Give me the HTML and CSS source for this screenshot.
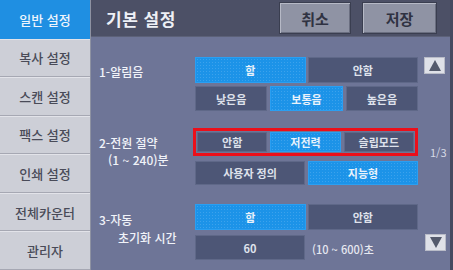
FILE: index.html
```html
<!DOCTYPE html>
<html lang="ko">
<head>
<meta charset="utf-8">
<title>기본 설정</title>
<link rel="stylesheet" href="styles.css">
</head>
<body>
<div class="screen">
  <nav class="side">
    <div class="tab active">일반 설정</div>
    <div class="tab">복사 설정</div>
    <div class="tab">스캔 설정</div>
    <div class="tab">팩스 설정</div>
    <div class="tab">인쇄 설정</div>
    <div class="tab">전체카운터</div>
    <div class="tab">관리자</div>
  </nav>
  <main class="main">
    <header class="head">
      <h1 class="title">기본 설정</h1>
      <div class="actions">
        <button class="hbtn">취소</button>
        <button class="hbtn save">저장</button>
      </div>
    </header>
    <div class="content">
      <section class="sec sec1">
        <div class="label">1-알림음</div>
        <div class="ctrls">
          <div class="row two tall"><span class="btn on">함</span><span class="btn">안함</span></div>
          <div class="row three"><span class="btn">낮은음</span><span class="btn on">보통음</span><span class="btn">높은음</span></div>
        </div>
        <div class="aside"><span class="arrow"><svg width="12" height="11" viewBox="0 0 12 11"><polygon points="6,0 12,11 0,11" fill="#545a6c"/></svg></span></div>
      </section>
      <section class="sec sec2">
        <div class="label"><span class="line">2-전원 절약</span><span class="line indent1">(1 ~ 240)분</span></div>
        <div class="ctrls">
          <div class="hl"><div class="row three"><span class="btn">안함</span><span class="btn on">저전력</span><span class="btn">슬립모드</span></div></div>
          <div class="row two short"><span class="btn">사용자 정의</span><span class="btn on">지능형</span></div>
        </div>
        <div class="aside"><span class="page">1/3</span></div>
      </section>
      <section class="sec sec3">
        <div class="label"><span class="line">3-자동</span><span class="line indent2">초기화 시간</span></div>
        <div class="ctrls">
          <div class="row two tall"><span class="btn on">함</span><span class="btn">안함</span></div>
          <div class="row field"><span class="btn">60</span><span class="range">(10 ~ 600)초</span></div>
        </div>
        <div class="aside"><span class="arrow down"><svg width="12" height="11" viewBox="0 0 12 11"><polygon points="0,0 12,0 6,11" fill="#545a6c"/></svg></span></div>
      </section>
    </div>
  </main>
</div>
</body>
</html>
```
FILE: styles.css
```css
* { box-sizing: border-box; }
html, body { margin: 0; padding: 0; }
body {
  width: 453px;
  height: 270px;
  overflow: hidden;
  font-family: "Noto Sans CJK KR", "Noto Sans", sans-serif;
  background: #6e7597;
}
.screen {
  display: flex;
  width: 453px;
  height: 270px;
}
.side {
  width: 91px;
  flex: none;
  display: grid;
  grid-template-rows: repeat(7, 1fr);
  background: #cdcfd7;
  border-right: 1px solid #8e92a2;
}
.tab {
  display: flex;
  align-items: center;
  justify-content: center;
  font-size: 13px;
  font-weight: 500;
  color: #494b58;
  border-top: 1px solid #e2e3e9;
  border-bottom: 1px solid #a6a8b3;
}
.tab.active {
  background: #1f8fe2;
  color: #eef4fc;
  border-color: #1f8fe2;
}
.main {
  flex: 1;
  display: flex;
  flex-direction: column;
  border-right: 3px solid #454a60;
}
.head {
  height: 37px;
  flex: none;
  display: flex;
  align-items: center;
  justify-content: space-between;
  background: #4c5066;
  padding: 0 13px 0 15px;
  border-bottom: 1px solid #5c6178;
}
.title {
  margin: 0;
  font-size: 17px;
  font-weight: 700;
  color: #eef0f6;
  letter-spacing: 0.5px;
}
.actions {
  display: flex;
  gap: 11px;
}
.hbtn {
  width: 72px;
  height: 32px;
  font-family: inherit;
  font-size: 15px;
  font-weight: 700;
  color: #2f3242;
  background: #8f93a4;
  border: 1px solid #3a3e50;
  box-shadow: inset 1px 1px 0 #b6b9c6, inset -1px -1px 0 #6a6e80;
  padding: 0;
}
.hbtn.save { width: 75px; }
.content {
  flex: 1;
  padding-top: 20px;
  background-color: #6e7597;
}
.sec {
  display: grid;
  grid-template-columns: 104px 223px 1fr;
}
.sec2 { margin-top: 17px; }
.sec3 { margin-top: 19px; }
.label {
  color: #f1f3f9;
  font-size: 12px;
  font-weight: 500;
  padding-left: 8px;
  display: flex;
  flex-direction: column;
}
.sec1 .label { line-height: 29px; }
.sec2 .label { padding-top: 6px; line-height: 17px; }
.sec3 .label { padding-top: 7px; line-height: 18px; }
.indent1 { padding-left: 9px; }
.indent2 { padding-left: 19px; }
.ctrls {
  display: flex;
  flex-direction: column;
}
.row {
  display: grid;
  gap: 2px;
}
.row.two { grid-template-columns: 1fr 1fr; }
.row.three { grid-template-columns: 1fr 1fr 1fr; gap: 3px; }
.row.tall { height: 26px; }
.sec1 .row.three { margin-top: 3px; height: 25px; }
.btn {
  display: flex;
  align-items: center;
  justify-content: center;
  background: #4d5676;
  border: 1px solid #5f6888;
  color: #dfe2ec;
  font-size: 11px;
  font-weight: 700;
  white-space: nowrap;
}
.btn.on {
  background-color: #1c93e8;
  background-image: radial-gradient(circle, rgba(120, 190, 245, 0.35) 0.6px, transparent 1px);
  background-size: 3px 3px;
  border-color: #2a9ff2;
  color: #e9f2fb;
}
.hl {
  margin-left: -2px;
  height: 28px;
  border: 3px solid #ec0f1a;
  padding: 1px;
  width: 225px;
}
.hl .row.three { height: 100%; }
.row.short { margin-top: 5px; height: 24px; gap: 3px; }
.row.field {
  margin-top: 5px;
  height: 25px;
  grid-template-columns: 110px 1fr;
  gap: 7px;
}
.range {
  display: flex;
  align-items: flex-end;
  padding-bottom: 3px;
  color: #e6e8f0;
  font-size: 11px;
  font-weight: 500;
}
.aside {
  position: relative;
}
.arrow {
  display: flex;
  align-items: center;
  justify-content: center;
  width: 21px;
  height: 17px;
  margin-left: 6px;
  background: #dfe1e8;
  border: 1px solid #b9bcc8;
}
.arrow.down { margin-top: 30px; margin-left: 7px; }
.page {
  display: block;
  margin-top: 17px;
  margin-left: 12px;
  color: #d6d9e4;
  font-size: 11px;
  line-height: 14px;
}
```
